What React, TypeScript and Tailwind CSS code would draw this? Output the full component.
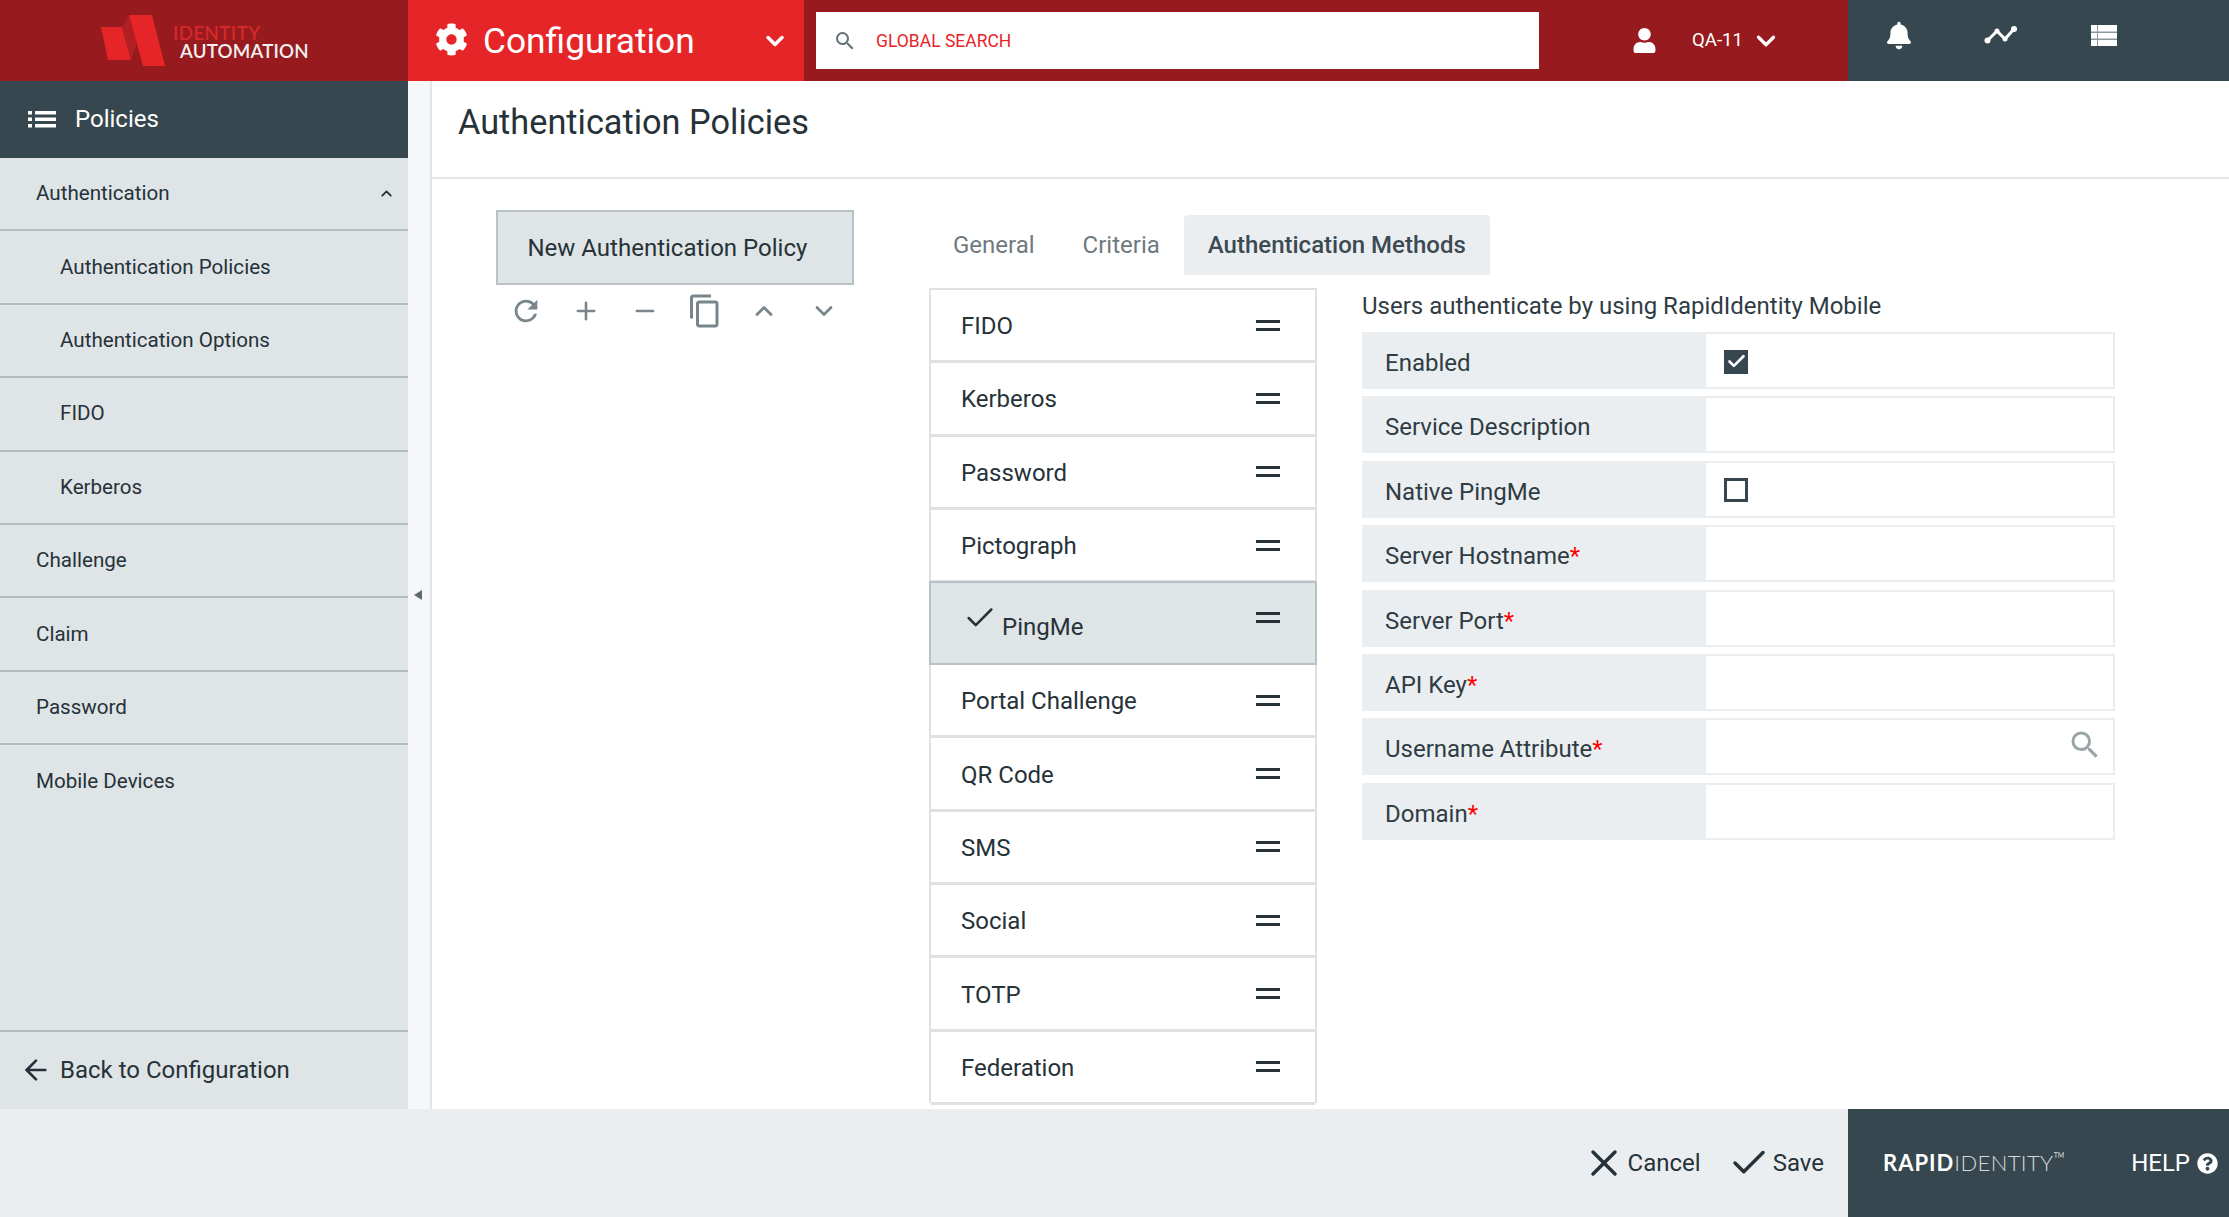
import { ArrowLeft, Check, ChevronDown, ChevronUp, Minus, Plus, X } from "lucide-react";
import { FaBell, FaCog, FaQuestionCircle, FaUser } from "react-icons/fa";
import { MdContentCopy, MdRefresh, MdSearch } from "react-icons/md";

const navItems = [
  { label: "Authentication", chevron: true },
  { label: "Authentication Policies", sub: true },
  { label: "Authentication Options", sub: true },
  { label: "FIDO", sub: true },
  { label: "Kerberos", sub: true },
  { label: "Challenge" },
  { label: "Claim" },
  { label: "Password" },
  { label: "Mobile Devices", last: true },
];

const methods = ["FIDO", "Kerberos", "Password", "Pictograph", "PingMe", "Portal Challenge", "QR Code", "SMS", "Social", "TOTP", "Federation"];

const fields = [
  { label: "Enabled", kind: "checked" },
  { label: "Service Description" },
  { label: "Native PingMe", kind: "unchecked" },
  { label: "Server Hostname", required: true },
  { label: "Server Port", required: true },
  { label: "API Key", required: true },
  { label: "Username Attribute", required: true, kind: "search" },
  { label: "Domain", required: true },
];

const Logo = () => (
  <div className="flex h-[81px] w-[408px] shrink-0 items-center bg-[#971b1e] pl-[100px]">
    <svg width="66" height="53" viewBox="0 0 66 53" className="mb-[1px] shrink-0">
      <polygon points="1,13 22,13 31,46 8,46" fill="#e62528" />
      <polygon points="22,13 29,1 37,28 31,46" fill="#b01f22" />
      <polygon points="29,1 52,1 65,52 43,52" fill="#e62528" />
    </svg>
    <div className="mt-[3px] ml-[7px] flex flex-col text-[18.7px] leading-[18px] font-semibold [font-family:Lato,sans-serif]">
      <span className="tracking-[0.4px] text-[#d6282b]">IDENTITY</span>
      <span className="ml-[7px] tracking-[0.2px] text-[#f1f1f1]">AUTOMATION</span>
    </div>
  </div>
);

const TopBar = () => (
  <header className="flex h-[81px] shrink-0">
    <Logo />
    <div className="flex w-[396px] shrink-0 items-center bg-[#e62528] pl-[27px] text-white">
      <FaCog className="size-[33px] -translate-y-[1px]" />
      <span className="mt-[2px] ml-[15px] text-[35.3px] leading-none">Configuration</span>
      <ChevronDown className="ml-[66px] size-[28px]" strokeWidth={3} />
    </div>
    <div className="flex flex-1 items-center bg-[#971b1e] pl-[12px]">
      <div className="flex h-[57px] w-[723px] items-center bg-white pl-[17px]">
        <MdSearch className="size-[24px] text-[#5f6f77]" />
        <span className="mt-[1px] ml-[19px] text-[17.5px] text-[#e62528]">GLOBAL SEARCH</span>
      </div>
      <FaUser className="ml-[93px] size-[25px] text-white" />
      <span className="mt-[1px] ml-[35px] text-[18.6px] text-white">QA-11</span>
      <ChevronDown className="ml-[8px] size-[30px] text-white" strokeWidth={2.6} />
    </div>
    <div className="flex w-[381px] shrink-0 items-start gap-[73px] bg-[#37474f] pt-[21px] pl-[39px] text-white">
      <FaBell className="h-[29px] w-[24px]" />
      <svg width="34" height="22" viewBox="0 0 34 22" className="mt-[3px]">
        <polyline points="3,17 13,7 21,15 30,5" fill="none" stroke="white" strokeWidth="3" />
        <circle cx="3.5" cy="16.5" r="3" fill="white" />
        <circle cx="13" cy="7" r="2.5" fill="white" />
        <circle cx="21" cy="15" r="2.5" fill="white" />
        <circle cx="30" cy="5" r="3" fill="white" />
      </svg>
      <svg width="26" height="21" viewBox="0 0 26 21" className="mt-[4px]">
        <rect width="26" height="21" fill="white" />
        <rect x="6" width="1" height="21" fill="#8d979c" />
        <rect y="6.5" width="26" height="1.5" fill="#8d979c" />
        <rect y="13.5" width="26" height="1.5" fill="#8d979c" />
      </svg>
    </div>
  </header>
);

const Sidebar = () => (
  <aside className="flex w-[408px] shrink-0 flex-col bg-[#dfe4e7] text-[#263238]">
    <div className="flex h-[77px] shrink-0 items-center bg-[#37474f] pb-[1px] pl-[28px] text-white">
      <svg width="28" height="17" viewBox="0 0 28 17" fill="white">
        <rect width="4" height="3.5" />
        <rect y="6.5" width="4" height="3.5" />
        <rect y="13" width="4" height="3.5" />
        <rect x="7" width="21" height="3.5" />
        <rect x="7" y="6.5" width="21" height="3.5" />
        <rect x="7" y="13" width="21" height="3.5" />
      </svg>
      <span className="ml-[19px] text-[24px]">Policies</span>
    </div>
    <nav className="flex-1">
      {navItems.map((item) => (
        <div
          key={item.label}
          className={`flex h-[73.4px] items-center justify-between border-[#b0bcc2] pr-[13px] text-[20.6px] ${item.last ? "" : "border-b-2"} ${item.sub ? "pl-[60px]" : "pl-[36px]"}`}
        >
          <span>{item.label}</span>
          {item.chevron && <ChevronUp className="size-[17px]" strokeWidth={2.6} />}
        </div>
      ))}
    </nav>
    <div className="flex h-[79px] shrink-0 items-center border-t-2 border-[#b0bcc2] pb-[2px] pl-[20px] text-[24px]">
      <ArrowLeft className="size-[32px]" strokeWidth={2} />
      <span className="ml-[8px]">Back to Configuration</span>
    </div>
  </aside>
);

const CollapseStrip = () => (
  <div className="flex w-[24px] shrink-0 items-center justify-center border-r-2 border-[#e0e5e8] bg-[#f5f7f8]">
    <div className="mr-[3px] h-0 w-0 border-y-[5px] border-r-[8px] border-y-transparent border-r-[#5f6b70]" />
  </div>
);

const PolicyColumn = () => (
  <div className="ml-[63.5px] w-[358px] shrink-0 pt-[31px]">
    <div className="flex h-[75px] items-center border-[2.5px] border-[#b8c2c6] bg-[#dfe4e7] pl-[30px] text-[24px] text-[#263238]">
      New Authentication Policy
    </div>
    <div className="ml-[1px] flex h-[52px] text-[#78868c]">
      <div className="flex w-[60px] items-center justify-center">
        <MdRefresh className="size-[34px]" />
      </div>
      <div className="flex w-[60px] items-center justify-center">
        <Plus className="size-[28px]" strokeWidth={2.2} />
      </div>
      <div className="flex w-[60px] items-center justify-center">
        <Minus className="size-[28px]" strokeWidth={2.2} />
      </div>
      <div className="flex w-[60px] items-center justify-center">
        <MdContentCopy className="size-[36px]" />
      </div>
      <div className="flex w-[60px] items-center justify-center">
        <ChevronUp className="size-[28px]" strokeWidth={2.4} />
      </div>
      <div className="flex w-[60px] items-center justify-center">
        <ChevronDown className="size-[28px]" strokeWidth={2.4} />
      </div>
    </div>
  </div>
);

const Tabs = () => (
  <div className="flex h-[60px] text-[24px]">
    <div className="flex items-center px-[24px] text-[#6f7a80]">General</div>
    <div className="flex items-center px-[24px] text-[#6f7a80]">Criteria</div>
    <div className="flex items-center rounded-t-[4px] bg-[#ebeef1] px-[24px] font-medium text-[#3c4a51]">Authentication Methods</div>
  </div>
);

const Handle = () => (
  <div className="flex w-[24px] shrink-0 flex-col gap-[5px]">
    <div className="h-[3px] bg-[#263238]" />
    <div className="h-[3px] bg-[#263238]" />
  </div>
);

const MethodList = () => (
  <div className="mt-[13px] h-[815px] w-[388px] shrink-0 border-x-2 border-t-2 border-[#dfe1e2]">
    {methods.map((m) =>
      m === "PingMe" ? (
        <div key={m} className="-mx-[2px] -mt-[2px] flex h-[84px] items-center justify-between border-2 border-[#b8c2c6] bg-[#dfe4e7] pr-[35px] pl-[32px] text-[24px] text-[#263238]">
          <div className="flex items-start">
            <Check className="size-[34px] -translate-y-[4px]" strokeWidth={1.8} />
            <span className="ml-[5px] translate-y-[4px]">{m}</span>
          </div>
          <div className="-translate-y-[6px]">
            <Handle />
          </div>
        </div>
      ) : (
        <div key={m} className="flex h-[73.3px] items-center justify-between border-b-[3px] border-[#dfe1e2] pr-[35px] pl-[30px] text-[24px] text-[#263238]">
          <span className="translate-y-[1px]">{m}</span>
          <Handle />
        </div>
      ),
    )}
  </div>
);

const FormRow = ({ label, required, kind }: { label: string; required?: boolean; kind?: string }) => (
  <div className="mb-[7.4px] flex h-[57px]">
    <div className="flex w-[342px] shrink-0 items-center bg-[#ebeef1] pt-[5px] pl-[23px] text-[24px] text-[#2f3c43]">
      {label}
      {required && <span className="text-[#ff0000]">*</span>}
    </div>
    <div className="flex flex-1 items-center border-2 border-[#ebeef1] bg-white pl-[18px]">
      {kind === "checked" && (
        <div className="mt-[2px] flex size-[24px] items-center justify-center bg-[#37474f]">
          <Check className="size-[21px] text-white" strokeWidth={3} />
        </div>
      )}
      {kind === "unchecked" && <div className="mt-[2px] size-[24px] border-[3px] border-[#37474f]" />}
      {kind === "search" && <MdSearch className="mb-[4px] ml-auto mr-[10px] size-[36px] text-[#9aa5aa]" />}
    </div>
  </div>
);

const AuthForm = () => (
  <div className="ml-[45px] w-[753px] shrink-0 pt-[15px]">
    <div className="mb-[10px] flex h-[32px] items-center text-[24px] text-[#2f3c43]">Users authenticate by using RapidIdentity Mobile</div>
    {fields.map((f) => (
      <FormRow key={f.label} {...f} />
    ))}
  </div>
);

const Footer = () => (
  <footer className="flex h-[108px] shrink-0 bg-[#ebeef1]">
    <div className="flex flex-1 items-center justify-end pr-[24px] text-[24px] text-[#263238]">
      <X className="size-[44px]" strokeWidth={1.9} />
      <span className="ml-[2px]">Cancel</span>
      <Check className="ml-[27px] size-[42px]" strokeWidth={2} />
      <span className="ml-[3px]">Save</span>
    </div>
    <div className="flex w-[381px] shrink-0 items-center bg-[#37474f] pl-[35px] text-white">
      <div className="flex items-start text-[22px] leading-none [font-family:Lato,sans-serif]">
        <span className="font-bold tracking-[1px]">RAPID</span>
        <span className="font-light tracking-[0.4px] text-[#d5d9db]">IDENTITY</span>
        <span className="text-[7px] text-[#d5d9db]">TM</span>
      </div>
      <span className="ml-auto text-[24px]">HELP</span>
      <FaQuestionCircle className="mr-[11px] ml-[7px] size-[21px]" />
    </div>
  </footer>
);

export default function App() {
  return (
    <div className="flex h-[1217px] w-[2229px] flex-col overflow-hidden bg-white [font-family:Roboto,sans-serif]">
      <TopBar />
      <div className="flex min-h-0 flex-1">
        <Sidebar />
        <CollapseStrip />
        <main className="flex min-w-0 flex-1 flex-col">
          <div className="flex h-[98px] shrink-0 items-start border-b-2 border-[#e0e5e8] pt-[16px] pl-[26px] text-[34.3px] text-[#263238]">
            Authentication Policies
          </div>
          <div className="flex min-h-0 flex-1">
            <PolicyColumn />
            <div className="ml-[75.5px] flex-1 pt-[36px]">
              <Tabs />
              <div className="flex">
                <MethodList />
                <AuthForm />
              </div>
            </div>
          </div>
        </main>
      </div>
      <Footer />
    </div>
  );
}
